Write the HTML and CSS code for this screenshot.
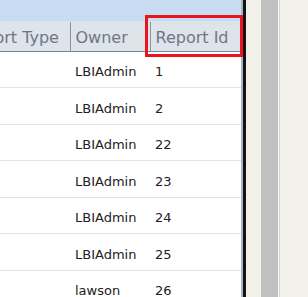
FILE: index.html
```html
<!DOCTYPE html>
<html>
<head>
    <title>Reports</title>
    <link rel="stylesheet" href="styles.css">
</head>
<body>
    <div class="page">
        <div class="grid-pane">
            <div class="pane-top"></div>
            <table class="grid">
                <colgroup>
                    <col class="col-type">
                    <col class="col-owner">
                    <col class="col-id">
                </colgroup>
                <thead>
                    <tr>
                        <th class="type-head">Report Type</th>
                        <th>Owner</th>
                        <th>Report Id</th>
                    </tr>
                </thead>
                <tbody>
                    <tr><td></td><td>LBIAdmin</td><td>1</td></tr>
                    <tr><td></td><td>LBIAdmin</td><td>2</td></tr>
                    <tr><td></td><td>LBIAdmin</td><td>22</td></tr>
                    <tr><td></td><td>LBIAdmin</td><td>23</td></tr>
                    <tr><td></td><td>LBIAdmin</td><td>24</td></tr>
                    <tr><td></td><td>LBIAdmin</td><td>25</td></tr>
                    <tr><td></td><td>lawson</td><td>26</td></tr>
                </tbody>
            </table>
        </div>
        <div class="frame-edge"></div>
        <div class="side">
            <div class="side-gap"></div>
            <div class="side-bar"></div>
            <div class="side-line"></div>
            <div class="side-rest"></div>
        </div>
        <div class="highlight"></div>
    </div>
</body>
</html>
```

FILE: styles.css
```css
body {
    margin: 0;
    font-family: "DejaVu Sans", Verdana, sans-serif;
    background-color: #f1f1e9;
    overflow: hidden;
}

.page {
    position: relative;
    display: flex;
    height: 297px;
}

.grid-pane {
    width: 241px;
    background-color: #fff;
    border-right: 2px solid #a7b6c6;
    overflow: hidden;
}

.pane-top {
    height: 21px;
    background-color: #c7dcf0;
    border-bottom: 1px solid #d8e4f0;
}

.grid {
    margin-left: -50px;
    width: 300px;
    table-layout: fixed;
    border-collapse: collapse;
}

.col-type {
    width: 120px;
}

.col-owner {
    width: 80px;
}

.col-id {
    width: 100px;
}

.grid th {
    height: 29px;
    padding: 3px 0 0 5px;
    background-color: #dfe3ea;
    color: #6c7888;
    font-size: 16px;
    font-weight: normal;
    text-align: left;
    white-space: nowrap;
    border-bottom: 1px solid #7c838e;
    border-right: 1px solid #8e939a;
    box-sizing: border-box;
}

.grid th.type-head {
    padding-left: 14px;
    overflow: hidden;
}

.grid td {
    height: 36.5px;
    padding: 5px 0 0 5px;
    color: #222;
    font-size: 13px;
    border-bottom: 1px solid #e2e2e2;
    box-sizing: border-box;
}

.highlight {
    position: absolute;
    left: 145px;
    top: 15px;
    width: 92px;
    height: 36px;
    border: 3px solid #e8141e;
}

.frame-edge {
    width: 3px;
    background-color: #141414;
}

.side {
    flex: 1;
    display: flex;
}

.side-gap {
    width: 15px;
}

.side-bar {
    width: 17px;
    background-color: #c0c0c0;
}

.side-line {
    width: 1px;
    background-color: #fafafa;
    border-right: 1px solid #d6d6ce;
}

.side-rest {
    flex: 1;
}
```
